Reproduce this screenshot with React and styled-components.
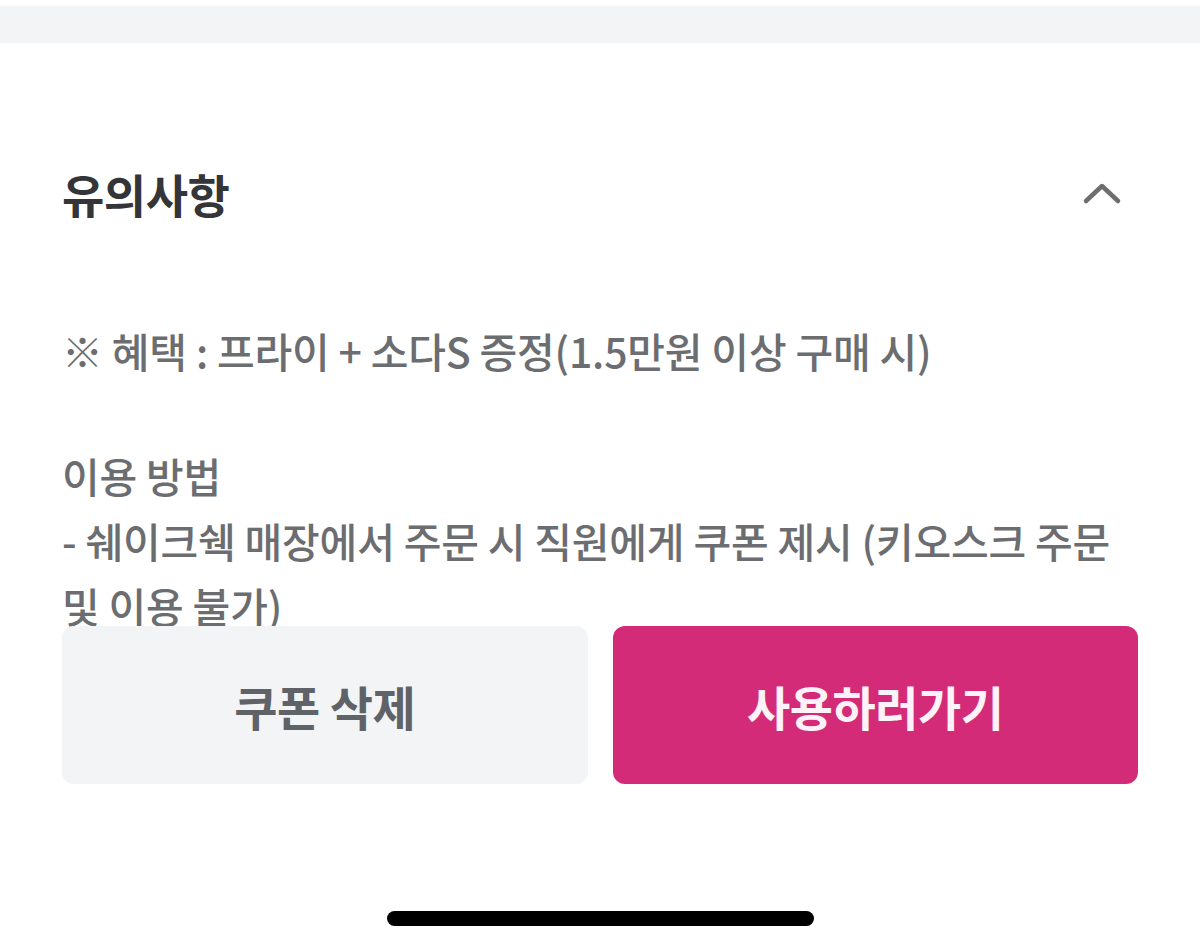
import React from "react";
import styled, { createGlobalStyle } from "styled-components";

const Global = createGlobalStyle`
  html, body { margin: 0; padding: 0; background: #fff; }
  body { font-family: "Noto Sans CJK KR", "Noto Sans", sans-serif; }
  * { box-sizing: border-box; }
`;

const Page = styled.div`
  width: 1200px;
  height: 930px;
  background: #fff;
  display: flex;
  flex-direction: column;
  overflow: hidden;
`;

const TopBand = styled.div`
  margin-top: 6px;
  height: 37px;
  background: #f2f4f6;
  flex-shrink: 0;
`;

const Section = styled.div`
  padding: 0 62px;
  display: flex;
  flex-direction: column;
`;

const Header = styled.div`
  display: flex;
  align-items: center;
  justify-content: space-between;
  height: 100px;
  margin-top: 100px;
`;

const Title = styled.h2`
  margin: 0;
  font-size: 46px;
  font-weight: 700;
  color: #333538;
  letter-spacing: -0.5px;
`;

const Chevron = styled.svg`
  width: 40px;
  height: 24px;
  margin-right: 16px;
`;

const Body = styled.div`
  margin-top: 75px;
  font-size: 41px;
  font-weight: 500;
  color: #6b6d70;
  line-height: 65px;
  letter-spacing: -0.2px;
`;

const Para = styled.p`
  margin: 0 0 ${(p) => p.$gap || 0}px;
`;

const Buttons = styled.div`
  display: grid;
  grid-template-columns: 1fr 1fr;
  gap: 25px;
  margin-top: -12px;
`;

const Button = styled.button`
  height: 158px;
  border: none;
  border-radius: 12px;
  font-family: inherit;
  font-size: 47px;
  font-weight: 700;
  letter-spacing: -0.5px;
  background: ${(p) => (p.$primary ? "#d42b78" : "#f2f4f6")};
  color: ${(p) => (p.$primary ? "#fdf2f8" : "#5f6266")};
`;

const HomeBar = styled.div`
  margin: auto auto 4px;
  width: 427px;
  height: 15px;
  border-radius: 8px;
  background: #000;
`;

export default function App() {
  return (
    <Page>
      <Global />
      <TopBand />
      <Section>
        <Header>
          <Title>유의사항</Title>
          <Chevron viewBox="0 0 40 24">
            <path d="M4 20 L20 5 L36 20" fill="none" stroke="#6e6e6e" strokeWidth="4.5" strokeLinecap="round" strokeLinejoin="round" />
          </Chevron>
        </Header>
        <Body>
          <Para $gap={60}>※ 혜택 : 프라이 + 소다S 증정(1.5만원 이상 구매 시)</Para>
          <Para>이용 방법</Para>
          <Para>- 쉐이크쉑 매장에서 주문 시 직원에게 쿠폰 제시 (키오스크 주문 및 이용 불가)</Para>
        </Body>
        <Buttons>
          <Button>쿠폰 삭제</Button>
          <Button $primary>사용하러가기</Button>
        </Buttons>
      </Section>
      <HomeBar />
    </Page>
  );
}
